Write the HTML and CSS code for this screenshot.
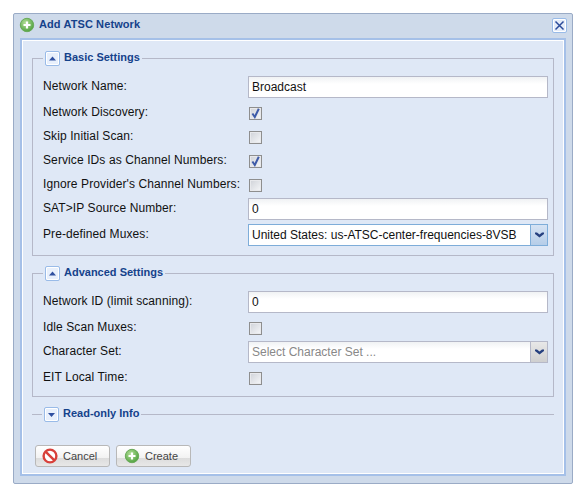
FILE: index.html
```html
<!DOCTYPE html>
<html lang="en">
<head>
    <meta charset="UTF-8">
    <title>Add ATSC Network</title>
    <link rel="stylesheet" href="styles.css">
</head>
<body>
    <svg width="0" height="0" class="defs">
        <defs>
            <radialGradient id="green" cx="40%" cy="35%" r="70%">
                <stop offset="0" stop-color="#b5e09a"/>
                <stop offset="1" stop-color="#4c9f3c"/>
            </radialGradient>
            <symbol id="add" viewBox="0 0 16 16">
                <circle cx="8" cy="8" r="6.7" fill="url(#green)" stroke="#6aaa5a"/>
                <path d="M8 4.5v7M4.5 8h7" stroke="#fff" stroke-width="2.2"/>
            </symbol>
            <symbol id="up" viewBox="0 0 15 15">
                <path d="M4 9.5 7.5 5.5 11 9.5Z" fill="#2f50a0"/>
            </symbol>
            <symbol id="down" viewBox="0 0 15 15">
                <path d="M4 6 11 6 7.5 10Z" fill="#2f50a0"/>
            </symbol>
            <symbol id="chevron" viewBox="0 0 17 20">
                <path d="M4 7.5 6 7.5 8.5 9.5 11 7.5 13 7.5 13 9 8.5 12.5 4 9Z" fill="#26407f"/>
            </symbol>
            <symbol id="tick" viewBox="0 0 13 13">
                <path d="M3.4 6.5 5.8 10 9.8 1.8" fill="none" stroke="#3e5ba8" stroke-width="2"/>
            </symbol>
        </defs>
    </svg>

    <div class="window">
        <div class="window-header">
            <svg class="icon"><use href="#add"/></svg>
            <span class="window-title">Add ATSC Network</span>
            <span class="close-btn">
                <svg width="11" height="11" viewBox="0 0 11 11"><path d="M1.5 1.5 9.5 9.5M9.5 1.5 1.5 9.5" stroke="#2a4a9a" stroke-width="1.5"/></svg>
            </span>
        </div>

        <div class="window-body">
            <fieldset class="group">
                <legend>
                    <span class="toggle"><svg width="13" height="13" viewBox="1 1 13 13"><use href="#up" width="15" height="15"/></svg></span>
                    <span class="legend-text">Basic Settings</span>
                </legend>
                <div class="form-row field-row">
                    <label>Network Name:</label>
                    <input class="text-input" type="text" value="Broadcast">
                </div>
                <div class="form-row">
                    <label>Network Discovery:</label>
                    <span class="check"><svg width="13" height="13"><use href="#tick"/></svg></span>
                </div>
                <div class="form-row">
                    <label>Skip Initial Scan:</label>
                    <span class="check"></span>
                </div>
                <div class="form-row">
                    <label>Service IDs as Channel Numbers:</label>
                    <span class="check"><svg width="13" height="13"><use href="#tick"/></svg></span>
                </div>
                <div class="form-row">
                    <label>Ignore Provider's Channel Numbers:</label>
                    <span class="check"></span>
                </div>
                <div class="form-row field-row">
                    <label>SAT&gt;IP Source Number:</label>
                    <input class="text-input" type="text" value="0">
                </div>
                <div class="form-row field-row">
                    <label>Pre-defined Muxes:</label>
                    <div class="combo focus">
                        <span class="combo-value">United States: us-ATSC-center-frequencies-8VSB</span>
                        <span class="combo-btn"><svg width="17" height="20"><use href="#chevron"/></svg></span>
                    </div>
                </div>
            </fieldset>

            <fieldset class="group">
                <legend>
                    <span class="toggle"><svg width="13" height="13" viewBox="1 1 13 13"><use href="#up" width="15" height="15"/></svg></span>
                    <span class="legend-text">Advanced Settings</span>
                </legend>
                <div class="form-row field-row">
                    <label>Network ID (limit scanning):</label>
                    <input class="text-input" type="text" value="0">
                </div>
                <div class="form-row">
                    <label>Idle Scan Muxes:</label>
                    <span class="check"></span>
                </div>
                <div class="form-row field-row">
                    <label>Character Set:</label>
                    <div class="combo">
                        <span class="combo-value placeholder">Select Character Set ...</span>
                        <span class="combo-btn"><svg width="17" height="20"><use href="#chevron"/></svg></span>
                    </div>
                </div>
                <div class="form-row">
                    <label>EIT Local Time:</label>
                    <span class="check"></span>
                </div>
            </fieldset>

            <fieldset class="group collapsed">
                <legend>
                    <span class="toggle"><svg width="13" height="13" viewBox="1 1 13 13"><use href="#down" width="15" height="15"/></svg></span>
                    <span class="legend-text">Read-only Info</span>
                </legend>
            </fieldset>

            <div class="toolbar">
                <button class="btn">
                    <svg class="icon" viewBox="0 0 16 16"><circle cx="8" cy="8" r="6.4" fill="#fff" stroke="#d8403a" stroke-width="2.4"/><path d="M3.6 3.6 12.4 12.4" stroke="#d8403a" stroke-width="2.4"/></svg>
                    Cancel
                </button>
                <button class="btn btn-create">
                    <svg class="icon"><use href="#add"/></svg>
                    Create
                </button>
            </div>
        </div>
    </div>
</body>
</html>
```

FILE: styles.css
```css
body {
    margin: 0;
    padding: 13px;
    background: #fff;
    font-family: "Liberation Sans", Arial, sans-serif;
    font-size: 12px;
    color: #111;
}
.defs {
    position: absolute;
}
.window {
    width: 560px;
    height: 471px;
    box-sizing: border-box;
    padding: 0 6px 7px 6px;
    background: #cedaea;
    border: 1px solid #9aabc6;
    border-radius: 2px;
    display: flex;
    flex-direction: column;
}
.window-header {
    height: 22px;
    padding-bottom: 2px;
    display: flex;
    align-items: center;
    gap: 4px;
    margin-left: -1px;
    flex: none;
}
.window-title {
    font-size: 11px;
    font-weight: bold;
    color: #15428b;
    letter-spacing: 0.1px;
    margin-top: -2px;
}
.icon {
    width: 16px;
    height: 16px;
    flex: none;
}
.close-btn {
    margin-left: auto;
    margin-right: -1px;
    width: 13px;
    height: 13px;
    border: 1px solid #99bbe8;
    border-radius: 2px;
    background: #e4ecf9;
    box-shadow: inset 0 0 0 1px #fff;
    display: flex;
    align-items: center;
    justify-content: center;
}
.window-body {
    flex: 1;
    box-sizing: border-box;
    padding: 11px 10px 0;
    background: #dfe8f6;
    border: 2px solid #a5c0e8;
    box-shadow: inset 0 0 0 1px #fff;
}
.group {
    margin: 0 0 10px;
    padding: 9px 5px 6px 10px;
    border: 1px solid #b5b8c8;
    min-width: 0;
}
.group legend {
    padding: 0 2px;
    display: flex;
    align-items: center;
    gap: 4px;
    font-size: 11px;
    font-weight: bold;
    color: #15428b;
}
.legend-text {
    margin-top: -3px;
}
.toggle {
    width: 13px;
    height: 13px;
    border: 1px solid #99bbe8;
    border-radius: 2px;
    background: #e8f0fc;
    box-shadow: inset 0 0 0 1px #fff;
    display: flex;
    align-items: center;
    justify-content: center;
    overflow: hidden;
}
.group.collapsed {
    margin-bottom: 0;
    padding: 0 5px 0 10px;
    border-width: 1px 0 0;
}
.form-row {
    height: 24px;
    display: flex;
    align-items: center;
}
.field-row {
    margin-bottom: 2px;
}
.form-row label {
    width: 205px;
    flex: none;
    margin-bottom: 2px;
    white-space: nowrap;
    letter-spacing: 0.1px;
}
.text-input {
    flex: 1;
    min-width: 0;
    height: 22px;
    box-sizing: border-box;
    padding: 0 3px;
    border: 1px solid #b5b8c8;
    background: linear-gradient(#f0f2f4, #fff 7px);
    font: inherit;
    color: #111;
    outline: none;
}
.check {
    width: 13px;
    height: 13px;
    margin-left: 1px;
    box-sizing: border-box;
    border: 1px solid #8e8e8e;
    background: linear-gradient(135deg, #cfd2d8, #f6f7f9);
    box-shadow: inset 0 0 0 1px #e8e9ec;
    display: block;
    position: relative;
}
.check svg {
    position: absolute;
    left: -1px;
    top: -1px;
}
.combo {
    flex: 1;
    height: 22px;
    box-sizing: border-box;
    display: flex;
    align-items: center;
    border: 1px solid #b5b8c8;
    background: linear-gradient(#f0f2f4, #fff 7px);
}
.combo.focus {
    border-color: #7eadd9;
    background: #fff;
}
.combo-value {
    flex: 1;
    padding-left: 3px;
}
.placeholder {
    color: #888;
}
.combo-btn {
    width: 16px;
    height: 20px;
    background: linear-gradient(#e8e8e8, #cfcfcf);
    border-left: 1px solid #b5b8c8;
    overflow: hidden;
}
.combo.focus .combo-btn {
    background: linear-gradient(#d6e3f4, #b5cde8);
    border-left-color: #7eadd9;
}
.toolbar {
    margin-top: 23px;
    display: flex;
    gap: 6px;
    padding-left: 3px;
}
.btn {
    width: 75px;
    height: 22px;
    padding: 0 0 0 6px;
    box-sizing: border-box;
    display: flex;
    align-items: center;
    gap: 5px;
    border: 1px solid #b8b8b8;
    border-radius: 3px;
    background: linear-gradient(#fff 0, #f2f2f2 60%, #dcdcdc 61%, #e8e8e8 100%);
    font-family: inherit;
    font-size: 11px;
    color: #444;
}
.btn-create {
    padding-left: 7px;
}
```
